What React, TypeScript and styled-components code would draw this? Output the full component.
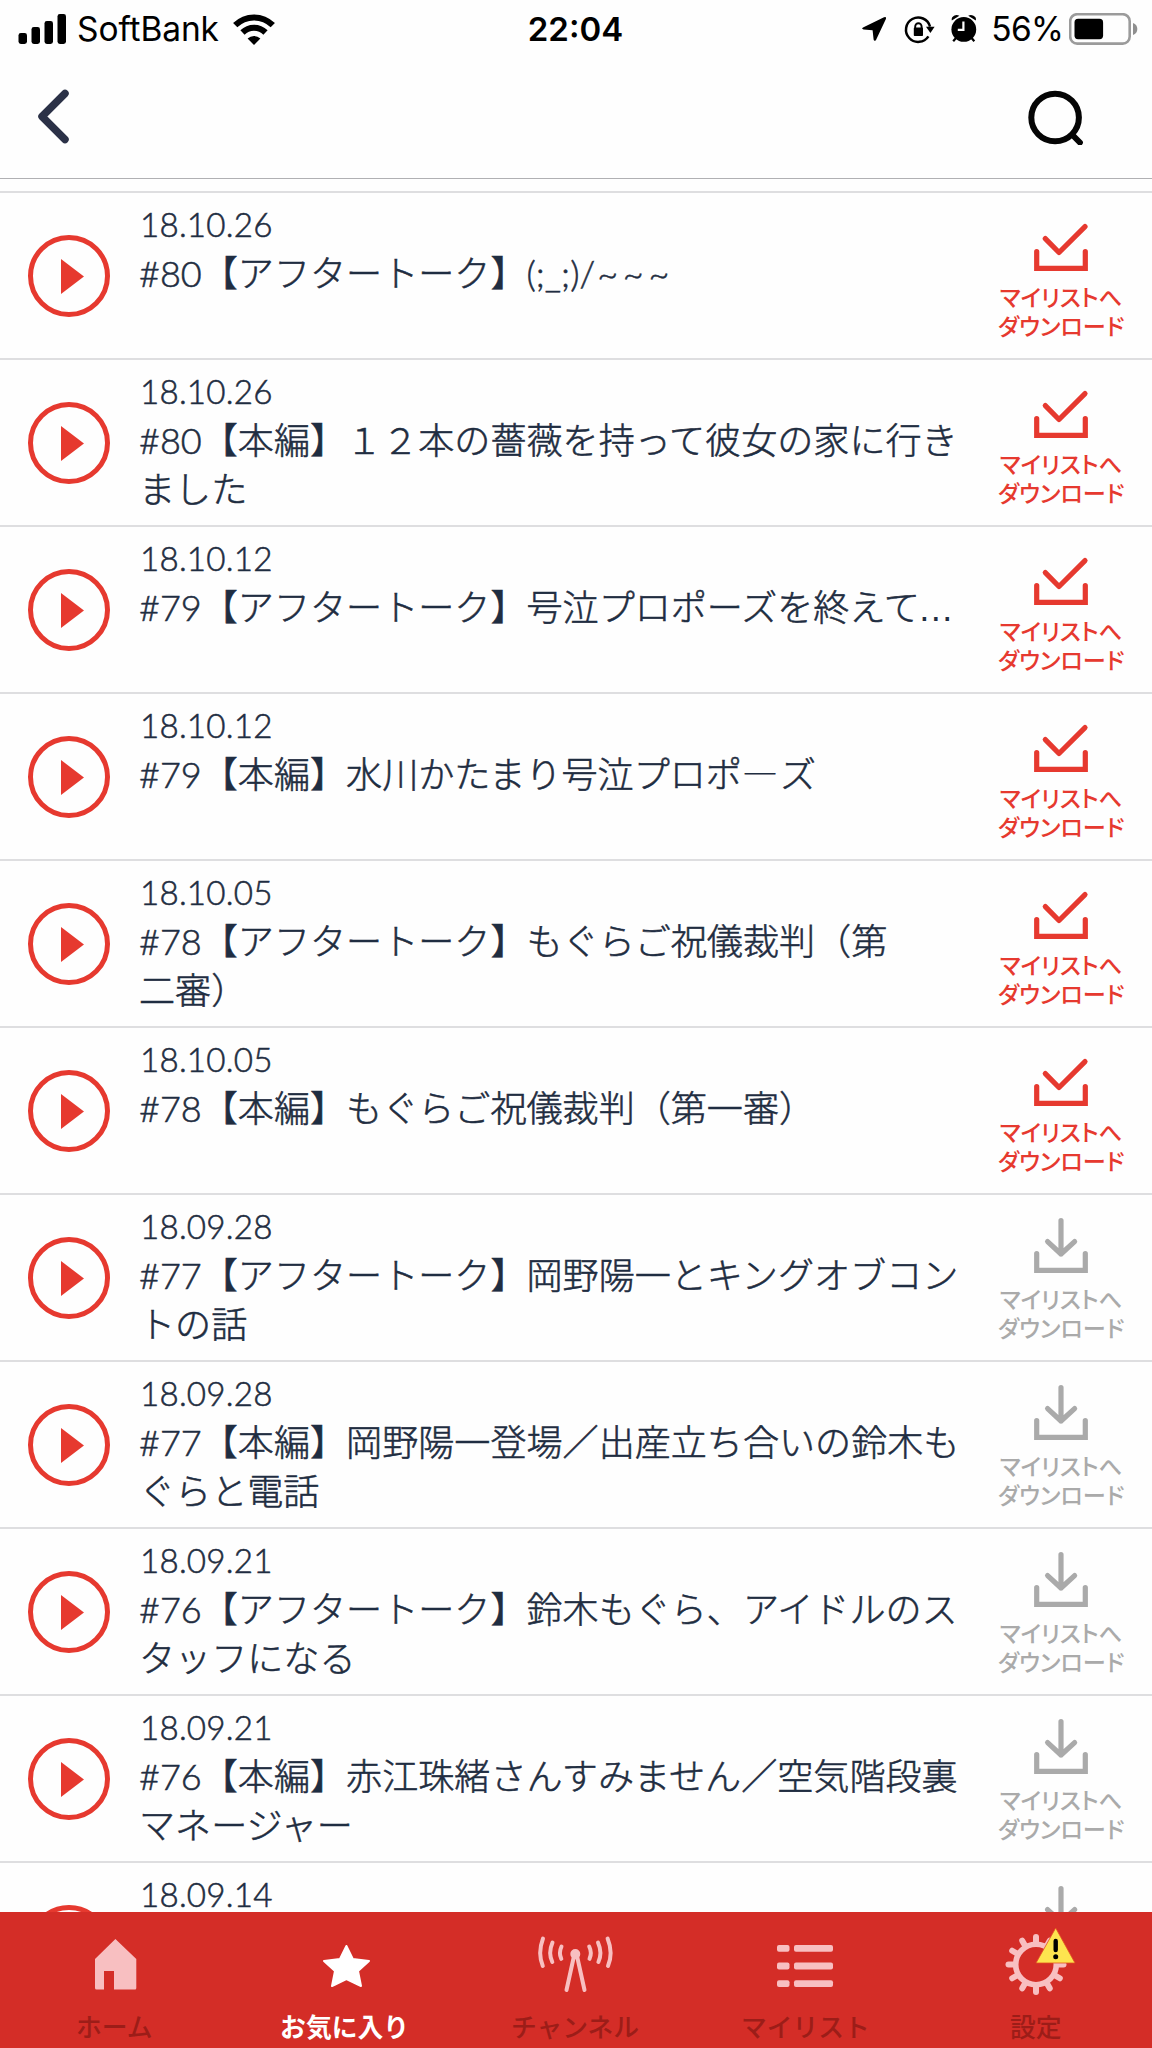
import React from "react";
import styled, { createGlobalStyle } from "styled-components";

const Global = createGlobalStyle`
  * { box-sizing: border-box; }
  body { margin: 0; background: #fdfdfd; }
`;
const ui = `Inter, "Noto Sans CJK JP", sans-serif`;
const jp = `Lato, "Noto Sans CJK JP", sans-serif`;

const Screen = styled.div`
  width: 1152px;
  height: 2048px;
  display: flex;
  flex-direction: column;
  overflow: hidden;
  background: #fefefe;
  color: #1f2d41;
  font-family: ${jp};
`;
const StatusBar = styled.div`
  height: 58px;
  flex: none;
  display: grid;
  grid-template-columns: 1fr auto 1fr;
  align-items: center;
  padding: 0 14px 0 18px;
  color: #000;
  font-family: ${ui};
  font-size: 33.5px;
`;
const StatusGroup = styled.div<{ $end?: boolean }>`
  display: flex;
  align-items: center;
  justify-content: ${(p) => (p.$end ? "flex-end" : "flex-start")};
  svg { flex: none; display: block; }
`;
const Carrier = styled.span`
  margin: 0 14px 0 10px;
  letter-spacing: -0.1px;
`;
const Clock = styled.span`
  font-weight: 600;
  font-size: 33px;
  margin-right: 5px;
`;
const Percent = styled.span`
  margin: 0 6px 0 14px;
  letter-spacing: -0.8px;
`;
const NavBar = styled.header`
  height: 121px;
  flex: none;
  display: flex;
  align-items: center;
  justify-content: space-between;
  padding: 0 67px 4px 35px;
  border-bottom: 1px solid #b0b0b3;
`;
const IconButton = styled.button`
  border: 0;
  padding: 0;
  background: none;
  display: block;
  svg { display: block; }
`;
const List = styled.main`
  flex: 1;
  min-height: 0;
  overflow: hidden;
  padding-top: 12px;
`;
const Row = styled.article`
  height: 167px;
  border-top: 2px solid #dedee0;
  display: grid;
  grid-template-columns: 139px 841px 1fr;
`;
const Play = styled.button`
  border: 5px solid #e6392f;
  border-radius: 50%;
  background: none;
  width: 82px;
  height: 82px;
  margin: 42px 0 0 28px;
  padding: 0 0 0 7px;
  display: flex;
  align-items: center;
  justify-content: center;
`;
const Info = styled.div`
  padding-top: 9px;
  font-weight: 300;
  -webkit-text-stroke: 0.55px currentColor;
`;
const DateText = styled.div`
  font-size: 33.2px;
  line-height: 44px;
  height: 47px;
  padding-left: 1px;
  font-kerning: none;
  letter-spacing: 0.2px;
`;
const Title = styled.div`
  font-size: 36.1px;
  line-height: 49px;
  height: 98px;
  white-space: pre;
`;
const Bar = styled.span`
  font-family: "Noto Sans CJK JP", sans-serif;
  line-height: 1;
  margin-right: 2px;
  -webkit-text-stroke: 0;
`;
const Ellipsis = styled.span`
  font-family: "Liberation Sans", sans-serif;
  line-height: 1;
  margin-left: -2px;
  -webkit-text-stroke: 0;
`;
const Waves = styled.span`
  margin-left: 2px;
  letter-spacing: 4.8px;
`;
const Download = styled.div<{ $done: boolean }>`
  display: flex;
  flex-direction: column;
  align-items: center;
  width: 164px;
  padding-top: 22px;
  margin-left: -1px;
  color: ${(p) => (p.$done ? "#e6392f" : "#aaaaaa")};
  svg { display: block; flex: none; }
`;
const DownloadLabel = styled.div`
  margin-top: 10px;
  font-family: "Noto Sans CJK JP", sans-serif;
  font-weight: 500;
  font-size: 23.2px;
  line-height: 28.5px;
  text-align: center;
  white-space: pre;
  font-feature-settings: "palt";
`;
const TabBar = styled.nav`
  height: 136px;
  flex: none;
  display: grid;
  grid-template-columns: repeat(5, 1fr);
  background: #d42d27;
`;
const Tab = styled.div<{ $active?: boolean }>`
  display: flex;
  flex-direction: column;
  align-items: center;
  padding: 17px 2px 0 0;
  color: ${(p) => (p.$active ? "#fff" : "#9c1d18")};
  font-family: "Noto Sans CJK JP", sans-serif;
  font-weight: ${(p) => (p.$active ? 700 : 500)};
  font-size: 25.8px;
  line-height: 36px;
  svg { display: block; margin-bottom: 11px; flex: none; overflow: visible; }
`;

const episodes: [string, React.ReactNode, boolean][] = [
  ["18.10.26", <>#80【アフタートーク】(;_;)/<Waves>~~~</Waves></>, true],
  ["18.10.26", "#80【本編】１２本の薔薇を持って彼女の家に行き\nました", true],
  ["18.10.12", <>#79【アフタートーク】号泣プロポーズを終えて<Ellipsis>…</Ellipsis></>, true],
  ["18.10.12", <>#79【本編】水川かたまり号泣プロポ<Bar>―</Bar>ズ</>, true],
  ["18.10.05", "#78【アフタートーク】もぐらご祝儀裁判（第\n二審）", true],
  ["18.10.05", "#78【本編】もぐらご祝儀裁判（第一審）", true],
  ["18.09.28", "#77【アフタートーク】岡野陽一とキングオブコン\nトの話", false],
  ["18.09.28", "#77【本編】岡野陽一登場／出産立ち合いの鈴木も\nぐらと電話", false],
  ["18.09.21", "#76【アフタートーク】鈴木もぐら、アイドルのス\nタッフになる", false],
  ["18.09.21", "#76【本編】赤江珠緒さんすみません／空気階段裏\nマネージャー", false],
  ["18.09.14", null, false],
];

const Signal = () => (
  <svg width="49" height="30" viewBox="0 0 49 30">
    <rect x="0.5" y="19" width="8.5" height="11" rx="2.4" />
    <rect x="13.5" y="13" width="8.5" height="17" rx="2.4" />
    <rect x="26.5" y="7" width="8.5" height="23" rx="2.4" />
    <rect x="39.5" y="0" width="8.5" height="30" rx="2.4" />
  </svg>
);
const Wifi = () => (
  <svg width="42" height="31" viewBox="0 0 42 31">
    <g fill="none" stroke="#000" strokeWidth="6">
      <path d="M2.2 11.2 A26.5 26.5 0 0 1 39.8 11.2" />
      <path d="M9.5 18.5 A16.3 16.3 0 0 1 32.5 18.5" />
    </g>
    <path d="M21 31 L14.6 24.5 A9.2 9.2 0 0 1 27.4 24.5 Z" />
  </svg>
);
const StatusIcons = () => (
  <svg width="116" height="30" viewBox="861 14 116 30">
    <path d="M863 27.6 L884 17.2 Q886.6 16.2 886 18.8 L876 40 Q874.2 42 873.6 39.4 L872.6 30.2 L863.6 29.4 Q861 29 863 27.6Z" />
    <g fill="none" stroke="#000" strokeWidth="2.5">
      <path d="M930 26.6 A12.2 12.2 0 1 0 928.4 36.4" />
      <path d="M915.2 29 V26.6 a3.2 3.4 0 0 1 6.4 0 V29" strokeWidth="1.9" />
    </g>
    <path d="M926 26.8 H934.6 L930.4 33Z" />
    <rect x="913.8" y="27.6" width="9.2" height="8.4" rx="0.8" />
    <circle cx="963.8" cy="29.4" r="12.4" />
    <path d="M951.8 20.6 Q951 17 954.5 15.4 Q957 14.4 959.4 15.8Z M975.8 20.6 Q976.8 17 973 15.4 Q970.5 14.4 968.2 15.8Z" />
    <path d="M956 38 L953.2 41.3 M971.6 38 L974.3 41.3" stroke="#000" strokeWidth="2.2" />
    <path d="M963.4 21.5 V29.8 H957.8" fill="none" stroke="#fff" strokeWidth="2.2" />
  </svg>
);
const Battery = () => (
  <svg width="69" height="32" viewBox="0 0 69 32">
    <rect x="1.2" y="1.2" width="59.5" height="29.4" rx="7" fill="none" stroke="#9b9b9b" strokeWidth="2.6" />
    <rect x="5.5" y="5.8" width="28.6" height="20.4" rx="3.6" />
    <path d="M64 10 Q68.3 11.5 68.3 16 Q68.3 20.5 64 22Z" fill="#8f8f8f" />
  </svg>
);

const DownloadIcon = ({ done }: { done: boolean }) => (
  <svg width="56" height="57" viewBox="0 0 56 57" fill="none" stroke="currentColor" strokeWidth="5.2" strokeLinecap="round" strokeLinejoin="round">
    <path d={done ? "M12.3 23.6 L26 37.5 L52 11.6" : "M28 3.6 V37 M14.6 24.6 L28 37 L41.6 24.6"} />
    <path d="M3.7 36.5 V53.4 H52.3 V36.5" strokeLinejoin="miter" />
  </svg>
);

const pink = "#f8bfc1";
const teeth = Array.from({ length: 12 }, (_, i) => i * 30);

export default function App() {
  return (
    <>
      <Global />
      <Screen>
        <StatusBar>
          <StatusGroup><Signal /><Carrier>SoftBank</Carrier><Wifi /></StatusGroup>
          <Clock>22:04</Clock>
          <StatusGroup $end><StatusIcons /><Percent>56%</Percent><Battery /></StatusGroup>
        </StatusBar>
        <NavBar>
          <IconButton aria-label="back">
            <svg width="36" height="60" viewBox="0 0 36 60" fill="none" stroke="#2b3147" strokeWidth="7.5" strokeLinecap="round" strokeLinejoin="round">
              <path d="M30 7.5 L7 30.5 L30 53.5" />
            </svg>
          </IconButton>
          <IconButton aria-label="search">
            <svg width="58" height="58" viewBox="0.5 -1.5 58 58" fill="none" stroke="#050505" strokeWidth="6" strokeLinecap="round">
              <circle cx="28.6" cy="29" r="23.8" /><path d="M46 46.5 L53.4 54" />
            </svg>
          </IconButton>
        </NavBar>
        <List>
          {episodes.map(([date, title, done], i) => (
            <Row key={i}>
              <Play aria-label="play">
                <svg width="23" height="35" viewBox="0 0 23 35"><path d="M0 0 L23 17.5 L0 35Z" fill="#e6392f" /></svg>
              </Play>
              <Info><DateText>{date}</DateText>{title && <Title>{title}</Title>}</Info>
              <Download $done={done}>
                <DownloadIcon done={done} />
                {title && <DownloadLabel>{"マイリストへ\nダウンロード"}</DownloadLabel>}
              </Download>
            </Row>
          ))}
        </List>
        <TabBar>
          <Tab>
            <svg width="72" height="68" viewBox="78 1929 72 68" fill={pink}>
              <path d="M115.4 1939 L136.3 1959 V1988 Q136.3 1989.5 135 1989.5 H114 V1971 H104 V1989.5 H96.5 Q95 1989.5 95 1988 V1959Z" />
            </svg>
            ホーム
          </Tab>
          <Tab $active>
            <svg width="72" height="68" viewBox="309 1929 72 68" fill="#fff" stroke="#fff" strokeWidth="2" strokeLinejoin="round">
              <path d="M346.4 1946 L352.8 1959 L369 1961 L358 1971 L361 1986 L346.4 1979 L332 1986 L335 1971 L324 1961 L340 1959Z" />
            </svg>
            お気に入り
          </Tab>
          <Tab>
            <svg width="80" height="68" viewBox="535 1929 80 68" fill="none" stroke={pink} strokeWidth="4" strokeLinecap="round">
              <circle cx="575.3" cy="1954" r="3" fill={pink} />
              <path d="M574 1956 L566.5 1990 M577 1956 L584.5 1990" />
              <path d="M543 1938.5 Q537.5 1953 542.8 1966 M552.5 1942.5 Q548 1953 552.3 1962 M561.5 1946.5 Q558.5 1953 561.3 1958.8" />
              <path d="M607.6 1938.5 Q613.4 1953 608 1966 M598 1942.5 Q602.6 1953 598.4 1962 M589.2 1946.5 Q592.3 1953 589.5 1958.8" />
            </svg>
            チャンネル
          </Tab>
          <Tab>
            <svg width="72" height="68" viewBox="769 1929 72 68" fill={pink}>
              {[1945, 1962.6, 1980.2].map((y) => (
                <g key={y}><rect x="777" y={y} width="12.5" height="6.8" rx="2" /><rect x="794" y={y} width="39" height="6.8" rx="2" /></g>
              ))}
            </svg>
            マイリスト
          </Tab>
          <Tab>
            <svg width="72" height="68" viewBox="1000 1929 72 68">
              <circle cx="1036" cy="1964.5" r="20.3" fill="none" stroke={pink} strokeWidth="5.6" />
              {teeth.map((a) => (
                <path key={a} d="M1036 1943 V1937" stroke={pink} strokeWidth="6" strokeLinecap="round" transform={`rotate(${a} 1036 1964.5)`} />
              ))}
              <path d="M1055.7 1928 L1075 1963 H1036Z" fill="#fde44f" stroke="#e2501f" strokeWidth="0.8" />
              <path d="M1055.7 1941 V1950" stroke="#000" strokeWidth="4.4" strokeLinecap="round" />
              <circle cx="1055.7" cy="1956.8" r="2.5" fill="#000" />
            </svg>
            設定
          </Tab>
        </TabBar>
      </Screen>
    </>
  );
}
